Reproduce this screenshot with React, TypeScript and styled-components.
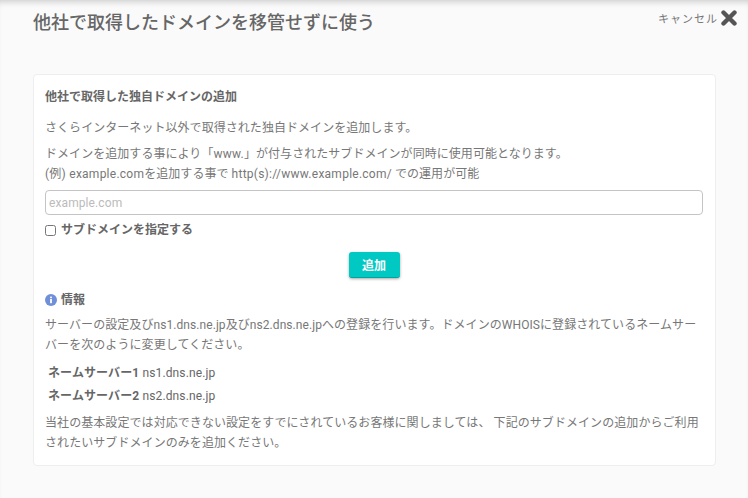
import React from "react";
import styled, { createGlobalStyle } from "styled-components";

const GlobalStyle = createGlobalStyle`
  html, body {
    margin: 0;
    padding: 0;
    height: 100%;
    overflow: hidden;
    background: #fafafa;
  }
  body {
    font-family: Roboto, "Noto Sans CJK JP", sans-serif;
    color: #666;
  }
`;

export default function App() {
  return (
    <Page>
      <GlobalStyle />
      <Header>
        <Title>他社で取得したドメインを移管せずに使う</Title>
        <Cancel>
          キャンセル
          <svg width="16" height="16" viewBox="0 0 16 16">
            <path d="M2.5 2.5 L13.5 13.5 M13.5 2.5 L2.5 13.5" stroke="#555" strokeWidth="4.4" strokeLinecap="round" />
          </svg>
        </Cancel>
      </Header>
      <Card>
        <CardTitle>他社で取得した独自ドメインの追加</CardTitle>
        <Text>さくらインターネット以外で取得された独自ドメインを追加します。</Text>
        <Text>
          ドメインを追加する事により「<Wide>www.</Wide>」が付与されたサブドメインが同時に使用可能となります。
          <br />
          <Wide>(例) example.com</Wide>を追加する事で <Wide>http(s)://www.example.com/</Wide> での運用が可能
        </Text>
        <Input placeholder="example.com" />
        <CheckRow>
          <input type="checkbox" />
          サブドメインを指定する
        </CheckRow>
        <ButtonRow>
          <AddButton>追加</AddButton>
        </ButtonRow>
        <InfoTitle>
          <svg width="12" height="12" viewBox="0 0 12 12">
            <circle cx="6" cy="6" r="6" fill="#6f8fd8" />
            <rect x="5.1" y="5" width="1.8" height="4.2" fill="#fff" />
            <rect x="5.1" y="2.6" width="1.8" height="1.6" fill="#fff" />
          </svg>
          情報
        </InfoTitle>
        <InfoText>
          サーバーの設定及びns1.dns.ne.jp及びns2.dns.ne.jpへの登録を行います。ドメインのWHOISに登録されているネームサーバーを次のように変更してください。
        </InfoText>
        <ServerList>
          <ServerRow>
            <b>ネームサーバー1</b> ns1.dns.ne.jp
          </ServerRow>
          <ServerRow>
            <b>ネームサーバー2</b> ns2.dns.ne.jp
          </ServerRow>
        </ServerList>
        <InfoText>
          当社の基本設定では対応できない設定をすでにされているお客様に関しましては、 下記のサブドメインの追加からご利用されたいサブドメインのみを追加ください。
        </InfoText>
      </Card>
    </Page>
  );
}

const Page = styled.div`
  width: 748px;
  height: 498px;
  box-sizing: border-box;
  padding: 0 32px 0 33px;
  box-shadow: inset 0 6px 6px -4px rgba(0, 0, 0, 0.18);
`;

const Header = styled.div`
  display: flex;
  justify-content: space-between;
  height: 74px;
`;

const Title = styled.h1`
  margin: 9px 0 0;
  font-size: 18px;
  line-height: 28px;
  font-weight: 500;
  color: #666;
`;

const Cancel = styled.div`
  display: flex;
  align-items: center;
  gap: 3px;
  height: 16px;
  margin: 10px -21px 0 0;
  font-size: 11px;
  letter-spacing: 1px;
  color: #777;
`;

const Card = styled.section`
  box-sizing: border-box;
  height: 392px;
  padding: 12px 12px 12px 11px;
  background: #fff;
  border: 1px solid #eee;
  border-radius: 4px;
`;

const CardTitle = styled.h2`
  margin: 0 0 11px;
  font-size: 12px;
  line-height: 20px;
  font-weight: 700;
`;

const Text = styled.p`
  margin: 0 0 6px;
  font-size: 12px;
  line-height: 20px;
  letter-spacing: 0.05px;
  color: #777;
`;

const Wide = styled.span`
  letter-spacing: 0.25px;
`;

const Input = styled.input`
  display: block;
  box-sizing: border-box;
  width: 100%;
  height: 25px;
  margin-top: 6px;
  padding: 0 3px;
  font: 12px Roboto, "Noto Sans CJK JP", sans-serif;
  letter-spacing: 0.1px;
  border: 1px solid #c4c4c4;
  border-radius: 4px;
  &::placeholder {
    color: #bbb;
  }
`;

const CheckRow = styled.label`
  display: flex;
  align-items: center;
  gap: 5px;
  margin-top: 5px;
  font-size: 12px;
  line-height: 20px;
  font-weight: 700;
  input {
    margin: 0;
    width: 11px;
    height: 11px;
  }
`;

const ButtonRow = styled.div`
  display: flex;
  justify-content: center;
  margin-top: 12px;
`;

const AddButton = styled.button`
  width: 51px;
  height: 26px;
  padding: 0;
  font: 700 12px Roboto, "Noto Sans CJK JP", sans-serif;
  color: #fff;
  background: #00c8c3;
  border: 0;
  border-bottom: 1px solid #00a5a0;
  border-radius: 3px;
  box-shadow: 0 1px 3px rgba(0, 0, 0, 0.35);
`;

const InfoTitle = styled.h3`
  display: flex;
  align-items: center;
  gap: 4px;
  margin: 12px 0 6px;
  font-size: 12px;
  line-height: 20px;
  font-weight: 700;
`;

const InfoText = styled.p`
  margin: 0;
  font-size: 12px;
  line-height: 19.5px;
  letter-spacing: 0.07px;
  color: #777;
`;

const ServerList = styled.div`
  display: flex;
  flex-direction: column;
  gap: 3px;
  margin: 8px 0;
  padding-left: 3px;
`;

const ServerRow = styled.div`
  font-size: 12px;
  line-height: 20px;
  letter-spacing: 0.12px;
  color: #666;
`;
